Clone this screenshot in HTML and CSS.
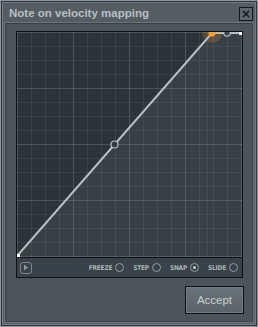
FILE: index.html
```html
<!DOCTYPE html>
<html lang="en">
<head>
<meta charset="UTF-8">
<title>Note on velocity mapping</title>
<link rel="stylesheet" href="styles.css">
</head>
<body>
<div class="win">
	<div class="titlebar">
		<span class="title">Note on velocity mapping</span>
		<span class="close">
			<svg width="12" height="12" viewBox="0 0 12 12"><path d="M3 3L9 9M9 3L3 9" stroke="#15191c" stroke-width="1.6"/></svg>
		</span>
	</div>
	<div class="panel">
		<div class="editor">
			<div class="plot">
				<svg width="225" height="225" viewBox="0 0 225 225">
					<polygon points="0,224 195,1 225,1 225,225 0,225" fill="rgba(255,255,255,0.06)"/>
					<path d="M190 0V225" stroke="rgba(255,255,255,0.1)" stroke-width="1"/>
					<path d="M0 224L195 1H224" fill="none" stroke="#b9c1c5" stroke-width="2"/>
					<circle cx="195" cy="1" r="10" fill="rgba(220,150,70,0.22)"/>
					<circle cx="195" cy="1" r="3.5" fill="#f0a040"/>
					<circle cx="210" cy="1" r="3.2" fill="#3a4349" stroke="#b9c1c5" stroke-width="1.2"/>
					<circle cx="97.5" cy="112.5" r="3.5" fill="#343c42" stroke="#b9c1c5" stroke-width="1.2"/>
					<rect x="0" y="222" width="3" height="3" fill="#ffffff"/>
					<rect x="222" y="0" width="3" height="3" fill="#ffffff"/>
				</svg>
			</div>
			<div class="toolbar">
				<span class="play">
					<svg width="6" height="7" viewBox="0 0 6 7"><path d="M1 0.5L5 3.5L1 6.5Z" fill="#8e979c"/></svg>
				</span>
				<span class="opts">
					<span class="opt">FREEZE <i class="radio"></i></span>
					<span class="opt">STEP <i class="radio"></i></span>
					<span class="opt">SNAP <i class="radio on"></i></span>
					<span class="opt">SLIDE <i class="radio"></i></span>
				</span>
			</div>
		</div>
		<div class="actions">
			<button class="btn">Accept</button>
		</div>
	</div>
</div>
</body>
</html>
```

FILE: styles.css
```css
html, body {
	margin: 0;
	padding: 0;
	background: #50585e;
}
.win {
	box-sizing: border-box;
	width: 258px;
	height: 327px;
	background: #555d63;
	border: 1px solid #8e969a;
	box-shadow: inset 0 0 0 1px #2e3438, inset 0 0 0 2px #757d81;
	padding: 0 3px 3px 3px;
	display: flex;
	flex-direction: column;
}
.titlebar {
	height: 21px;
	display: flex;
	align-items: center;
	justify-content: space-between;
	padding: 0 1px 0 5px;
}
.title {
	font-family: "Liberation Sans", Arial, sans-serif;
	font-weight: bold;
	font-size: 11.5px;
	color: #b7bfc3;
	margin-top: 2px;
}
.close {
	box-sizing: border-box;
	width: 14px;
	height: 14px;
	border: 1px solid #16191c;
	background: #5e676d;
	display: flex;
	align-items: center;
	justify-content: center;
	margin-top: 5px;
}
.close svg {
	display: block;
}
.panel {
	flex: 1;
	background: #4c5459;
	border: 1px solid #6e767b;
	box-shadow: inset 0 0 0 1px #3a4146;
	padding: 8px 10px 6px 11px;
	display: flex;
	flex-direction: column;
}
.editor {
	border: 1px solid #0f1214;
	background: #0f1214;
	display: flex;
	flex-direction: column;
	gap: 1px;
}
.plot {
	width: 225px;
	height: 225px;
	background-color: #2c343a;
	background-image:
		linear-gradient(to right, rgba(255,255,255,0.09) 1px, transparent 1px),
		linear-gradient(to bottom, rgba(255,255,255,0.09) 1px, transparent 1px),
		linear-gradient(to right, rgba(255,255,255,0.06) 1px, transparent 1px),
		linear-gradient(to bottom, rgba(255,255,255,0.06) 1px, transparent 1px);
	background-size: 56px 56px, 56px 56px, 14px 14px, 14px 14px;
}
.plot svg {
	display: block;
}
.toolbar {
	height: 19px;
	background: #394248;
	display: flex;
	align-items: center;
	justify-content: space-between;
	padding: 0 4px 0 3px;
}
.play {
	box-sizing: border-box;
	width: 12px;
	height: 12px;
	border: 1px solid #7c858a;
	border-radius: 3px;
	display: flex;
	align-items: center;
	justify-content: center;
}
.play svg {
	display: block;
}
.opts {
	display: flex;
	gap: 9px;
}
.opt {
	display: flex;
	align-items: center;
	gap: 3px;
	font-family: "DejaVu Sans Condensed", "DejaVu Sans", sans-serif;
	font-weight: bold;
	font-size: 6.5px;
	letter-spacing: -0.2px;
	color: #a9b2b6;
}
.radio {
	box-sizing: border-box;
	width: 9px;
	height: 9px;
	border: 1px solid #939ca0;
	border-radius: 50%;
	display: flex;
	align-items: center;
	justify-content: center;
}
.radio.on::after {
	content: "";
	width: 3px;
	height: 3px;
	border-radius: 50%;
	background: #c4ccd0;
}
.actions {
	display: flex;
	justify-content: flex-end;
	margin-top: 8px;
}
.btn {
	box-sizing: border-box;
	width: 59px;
	height: 28px;
	border: 1px solid #0f1214;
	box-shadow: inset 0 0 0 1px #747d82;
	background: linear-gradient(to bottom, #6a7379, #5b6369);
	font-family: "Liberation Sans", Arial, sans-serif;
	font-size: 11.5px;
	color: #c6ced2;
	padding: 0;
	margin-right: -1px;
}
```
